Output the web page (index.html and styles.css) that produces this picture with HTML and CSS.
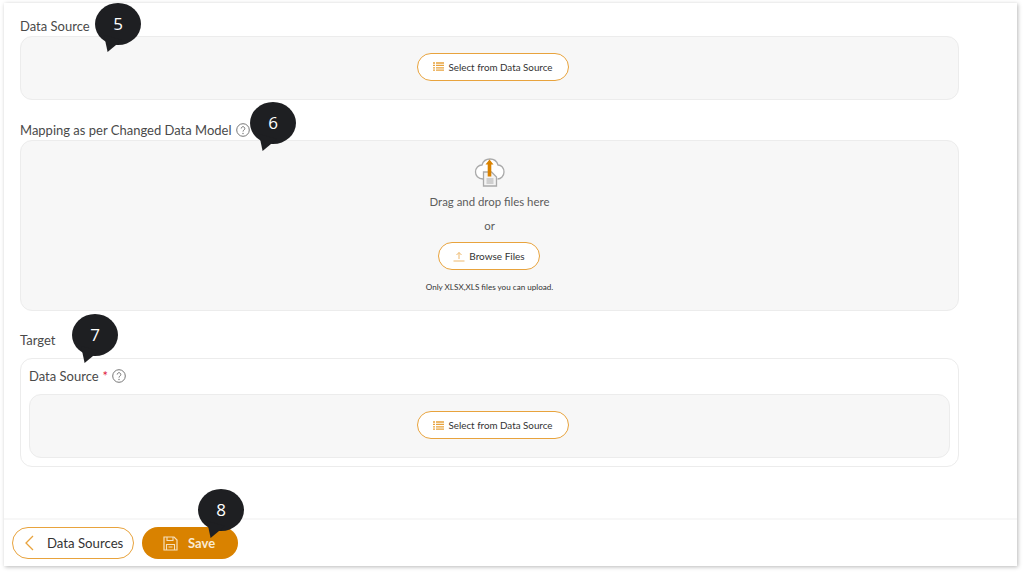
FILE: index.html
```html
<!DOCTYPE html>
<html lang="en">

<head>
  <meta charset="UTF-8">
  <meta name="viewport" content="width=device-width, initial-scale=1.0">
  <title>Data Model Change</title>

  <link rel="stylesheet" href="styles.css">
</head>

<body>
  <div class="card">
    <div class="content">
      <div class="field-label first-label">Data Source</div>
      <div class="drop-box select-box">
        <button class="outline-btn select-btn">
          <svg width="11" height="9" viewBox="0 0 11 9"><path d="M0 1h2M3 1h8M0 3.400h2M3 3.400h8M0 5.800h2M3 5.800h8M0 8.200h2M3 8.200h8" stroke="#e8a33d" stroke-width="1.300" fill="none"/></svg>
          Select from Data Source
        </button>
      </div>

      <div class="field-label mapping-label">
        Mapping as per Changed Data Model
        <svg class="help" width="14" height="14" viewBox="0 0 14 14"><circle cx="7" cy="7" r="6.300" fill="none" stroke="#777" stroke-width="1"/><path d="M5.200 5.500a1.800 1.800 0 1 1 2.800 1.500c-.7.500-1 .8-1 1.600" fill="none" stroke="#777" stroke-width="1"/><circle cx="7" cy="10.500" r=".7" fill="#777"/></svg>
      </div>
      <div class="drop-box upload-box">
        <svg class="cloud" width="32" height="32" viewBox="0 0 32 32">
          <path d="M9 23C4 23 1.500 19.500 1.500 16c0-4 3-7 6.500-7C9 5.500 12 3 16 3c4 0 7 2.500 8 6 3.500 0 6 3 6 7s-3 7-6.500 7" fill="#fff" stroke="#aaa" stroke-width="1.300"/>
          <path d="M9.500 16h8l5 5v9h-13z" fill="#f4f4f4" stroke="#aaa" stroke-width="1.300"/>
          <path d="M12.500 23h7M12.500 25h7M12.500 27h7" stroke="#aaa" stroke-width="1"/>
          <path d="M15.500 3.500l4 5h-2.200v12h-3.600v-12h-2.200z" fill="#d98200"/>
        </svg>
        <div class="drag-text">Drag and drop files here</div>
        <div class="or-text">or</div>
        <button class="outline-btn browse-btn">
          <svg width="12" height="11" viewBox="0 0 12 11"><path d="M6 8V1.500M3.500 4L6 1.500 8.500 4M.5 10h11" stroke="#eeb96e" stroke-width="1" fill="none"/></svg>
          Browse Files
        </button>
        <div class="hint-text">Only XLSX,XLS files you can upload.</div>
      </div>

      <div class="field-label target-label">Target</div>
      <div class="target-box">
        <div class="field-label inner-label">
          Data Source <span class="required">*</span>
          <svg class="help" width="14" height="14" viewBox="0 0 14 14"><circle cx="7" cy="7" r="6.300" fill="none" stroke="#777" stroke-width="1"/><path d="M5.200 5.500a1.800 1.800 0 1 1 2.800 1.500c-.7.500-1 .8-1 1.600" fill="none" stroke="#777" stroke-width="1"/><circle cx="7" cy="10.500" r=".7" fill="#777"/></svg>
        </div>
        <div class="drop-box inner-select">
          <button class="outline-btn select-btn">
            <svg width="11" height="9" viewBox="0 0 11 9"><path d="M0 1h2M3 1h8M0 3.400h2M3 3.400h8M0 5.800h2M3 5.800h8M0 8.200h2M3 8.200h8" stroke="#e8a33d" stroke-width="1.300" fill="none"/></svg>
            Select from Data Source
          </button>
        </div>
      </div>
    </div>

    <div class="footer">
      <button class="outline-btn back-btn">
        <svg width="10" height="16" viewBox="0 0 10 16"><path d="M9 1L2 8l7 7" stroke="#e8a33d" stroke-width="1.300" fill="none"/></svg>
        Data Sources
      </button>
      <button class="save-btn">
        <svg width="15" height="15" viewBox="0 0 15 15"><path d="M1 1h10l3 3v10H1z" fill="none" stroke="#f6dfbb" stroke-width="1.200"/><path d="M4 1v3.500h6V1M3.500 14V8.500h8V14M5.500 11h4" fill="none" stroke="#f6dfbb" stroke-width="1.100"/></svg>
        Save
      </button>
    </div>
  </div>

  <div class="bubble bubble-5">5</div>
  <div class="bubble bubble-6">6</div>
  <div class="bubble bubble-7">7</div>
  <div class="bubble bubble-8">8</div>
</body>

</html>
```

FILE: styles.css
```css
body {
  font-family: "Lato", "Open Sans", sans-serif;
  background-color: #fff;
  margin: 0;
  height: 573px;
  overflow: hidden;
  position: relative;
}

.card {
  margin: 3px 7px 0 4px;
  height: 563px;
  display: flex;
  flex-direction: column;
  background: white;
  box-shadow: 1px 1px 4px rgba(0, 0, 0, 0.28);
}

.content {
  flex: 1;
  padding: 0 58px 0 16px;
}

.field-label {
  color: #4a4a4a;
  font-size: 13px;
  line-height: 18px;
}

.first-label {
  margin-top: 14px;
}

.mapping-label {
  margin-top: 21px;
  display: flex;
  align-items: center;
  gap: 4px;
}

.target-label {
  margin-top: 20px;
}

.inner-label {
  margin: 8px 0 9px;
  display: flex;
  align-items: center;
  gap: 4px;
}

.required {
  color: #e0203c;
}

.help {
  flex-shrink: 0;
}

.drop-box {
  background: #f7f7f7;
  border: 1px solid #ececec;
  border-radius: 12px;
  box-sizing: border-box;
  display: flex;
  flex-direction: column;
  align-items: center;
}

.select-box {
  margin-top: 1px;
  height: 64px;
  justify-content: center;
  padding-bottom: 3px;
}

.upload-box {
  margin-top: 1px;
  height: 171px;
  padding-top: 15px;
}

.target-box {
  margin-top: 9px;
  height: 109px;
  box-sizing: border-box;
  border: 1px solid #ececec;
  border-radius: 12px;
  padding: 0 8px;
}

.inner-select {
  height: 64px;
  justify-content: center;
  padding-bottom: 2px;
}

.outline-btn {
  background: white;
  border: 1px solid #e8a33d;
  border-radius: 16px;
  color: #333;
  font-family: inherit;
  display: flex;
  align-items: center;
  justify-content: center;
  box-sizing: border-box;
  padding: 0;
}

.select-btn {
  width: 152px;
  height: 28px;
  margin-left: 7px;
  font-size: 9.800px;
  gap: 4px;
}

.browse-btn {
  width: 102px;
  height: 28px;
  margin-top: 8px;
  margin-left: -1px;
  font-size: 10px;
  gap: 4px;
}

.cloud {
  display: block;
}

.drag-text {
  margin-top: 6px;
  color: #5c5c5c;
  font-size: 11.400px;
  line-height: 16px;
}

.or-text {
  margin-top: 8px;
  color: #5c5c5c;
  font-size: 11.400px;
  line-height: 16px;
}

.hint-text {
  margin-top: 11px;
  color: #333;
  font-size: 8.100px;
  line-height: 12px;
}

.footer {
  height: 48px;
  box-sizing: border-box;
  border-top: 2px solid #f7f7f7;
  display: flex;
  align-items: flex-start;
  gap: 8px;
  padding: 7px 0 0 8px;
}

.back-btn {
  width: 122px;
  height: 32px;
  font-size: 13.200px;
  justify-content: flex-start;
  padding-left: 11px;
  gap: 13px;
}

.save-btn {
  width: 96px;
  height: 32px;
  background: #d98200;
  border: none;
  border-radius: 16px;
  color: #f9ead2;
  font-family: inherit;
  font-size: 13px;
  font-weight: 700;
  display: flex;
  align-items: center;
  justify-content: flex-start;
  padding: 0 0 0 21px;
  gap: 10px;
}

.bubble {
  position: absolute;
  width: 46px;
  height: 42px;
  border-radius: 50%;
  background: #1e1f22;
  color: white;
  font-family: "Open Sans", sans-serif;
  font-size: 17px;
  line-height: 42px;
  text-align: center;
}

.bubble::after {
  content: "";
  position: absolute;
  left: 9px;
  top: 32px;
  width: 18px;
  height: 17px;
  background: #1e1f22;
  clip-path: polygon(0 0, 100% 30%, 20% 100%);
}

.bubble-5 {
  left: 95px;
  top: 3px;
}

.bubble-6 {
  left: 250px;
  top: 102px;
}

.bubble-7 {
  left: 72px;
  top: 314px;
}

.bubble-8 {
  left: 198px;
  top: 489px;
}
```
